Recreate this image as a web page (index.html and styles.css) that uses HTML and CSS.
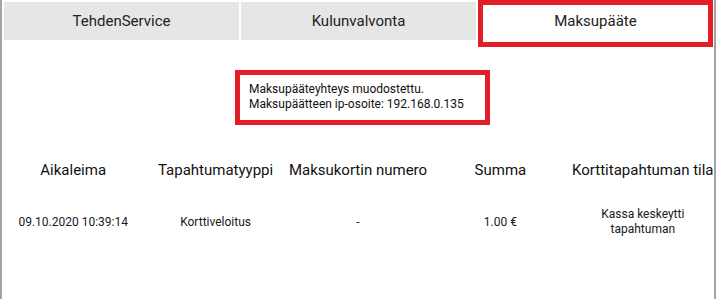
FILE: index.html
```html
<!DOCTYPE html>
<html lang="fi">
<head>
    <meta charset="UTF-8">
    <title>Maksupääte</title>
    <link rel="stylesheet" href="styles.css">
</head>
<body>
    <div class="page">
        <ul class="tabs">
            <li>TehdenService</li>
            <li>Kulunvalvonta</li>
            <li class="active">Maksupääte</li>
        </ul>
        <div class="status">
            <p>Maksupääteyhteys muodostettu.</p>
            <p>Maksupäätteen ip-osoite: 192.168.0.135</p>
        </div>
        <div class="table">
            <div class="row head">
                <div>Aikaleima</div>
                <div>Tapahtumatyyppi</div>
                <div>Maksukortin numero</div>
                <div>Summa</div>
                <div>Korttitapahtuman tila</div>
            </div>
            <div class="row">
                <div>09.10.2020 10:39:14</div>
                <div>Korttiveloitus</div>
                <div>-</div>
                <div>1.00 €</div>
                <div>Kassa keskeytti tapahtuman</div>
            </div>
        </div>
    </div>
</body>
</html>
```

FILE: styles.css
```css
*{
    padding: 0;
    margin: 0;
    box-sizing: border-box;
}
li{
    list-style: none;
}
body{
    background-color: #fff;
    font-family: Roboto, "Liberation Sans", sans-serif;
    color: #1a1a1a;
}
.page{
    width: 716px;
    height: 299px;
    border-left: 2px solid #a3a3a3;
    border-right: 2px solid #a3a3a3;
}
.tabs{
    display: flex;
    gap: 2px;
    padding: 2px 1px 0 2px;
}
.tabs li{
    flex: 1;
    height: 38px;
    background-color: #e6e6e6;
    display: flex;
    align-items: center;
    justify-content: center;
    font-size: 15px;
    color: #222;
}
.tabs .active{
    background-color: #fff;
    position: relative;
}
.tabs .active::after{
    content: "";
    position: absolute;
    top: -2px;
    left: 0;
    right: 0;
    bottom: -7px;
    border: 5px solid #e31e28;
}
.status{
    width: 255px;
    margin: 30px 0 0 233px;
    padding: 7px 9px 8px;
    border: 5px solid #e31e28;
    font-size: 12px;
    line-height: 15px;
    color: #111;
}
.table{
    margin-top: 35px;
}
.row{
    display: grid;
    grid-template-columns: repeat(5, 1fr);
    align-items: center;
    text-align: center;
}
.row div{
    padding: 0 8px;
}
.head{
    font-size: 15px;
    line-height: 20px;
    color: #111;
}
.head div{
    padding: 0;
    white-space: nowrap;
}
.row:not(.head){
    margin-top: 27px;
    font-size: 12px;
    line-height: 15px;
}
```
